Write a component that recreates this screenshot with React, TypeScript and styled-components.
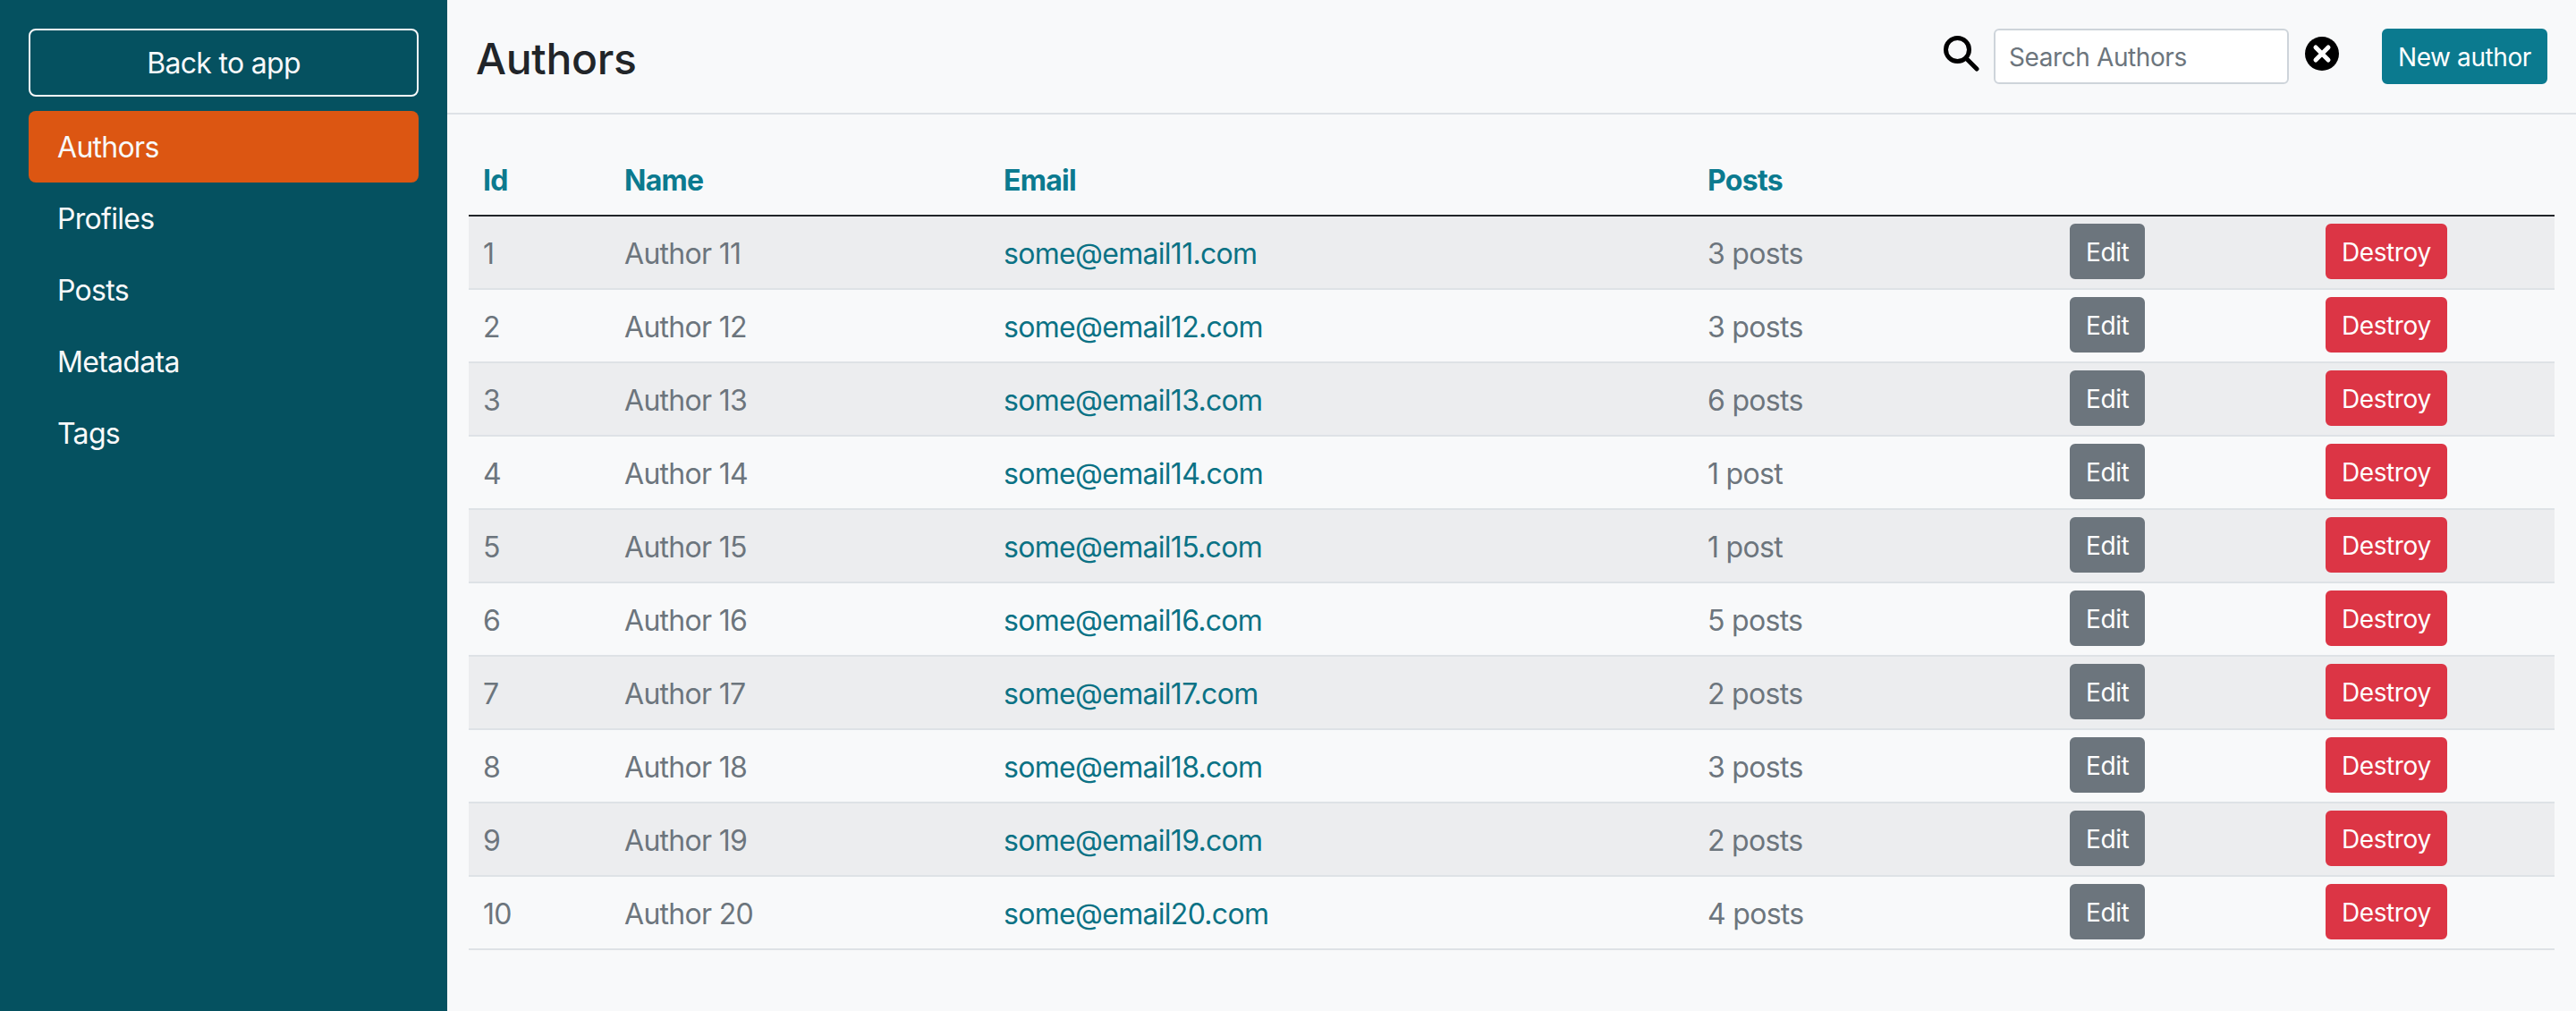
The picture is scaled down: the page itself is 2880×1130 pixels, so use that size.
import React from "react";
import styled, { createGlobalStyle } from "styled-components";

const Global = createGlobalStyle`
  html, body { margin: 0; padding: 0; background: #f8f9fa; }
  body { font-family: Inter, "Liberation Sans", sans-serif; font-size: 32px; line-height: 48px; letter-spacing: -0.7px; color: #212529; }
  * { box-sizing: border-box; }
`;

const Layout = styled.div`
  display: flex;
  width: 2880px;
  height: 1130px;
  overflow: hidden;
`;

const Sidebar = styled.aside`
  flex: 0 0 500px;
  background: #055160;
  padding: 32px;
  display: flex;
  flex-direction: column;
  gap: 16px;
`;

const BackButton = styled.a`
  display: block;
  height: 76px;
  border: 2px solid #f8f9fa;
  border-radius: 8px;
  padding: 13px 24px 11px;
  text-align: center;
  color: #f8f9fa;
`;

const NavList = styled.nav`
  display: flex;
  flex-direction: column;
`;

const NavItem = styled.a<{ $active?: boolean }>`
  display: block;
  height: 80px;
  padding: 17px 32px 15px;
  border-radius: 8px;
  color: #f8f9fa;
  background: ${(p) => (p.$active ? "#dc5612" : "transparent")};
`;

const Main = styled.main`
  flex: 1;
  min-width: 0;
  display: flex;
  flex-direction: column;
`;

const Header = styled.header`
  height: 128px;
  border-bottom: 2px solid #dee2e6;
  padding: 32px 32px 0 32px;
  display: flex;
  align-items: flex-start;
`;

const Title = styled.h1`
  margin: 2px 0 0;
  font-size: 48px;
  line-height: 64px;
  font-weight: 500;
  letter-spacing: -0.3px;
  flex: 1;
`;

const SearchIcon = styled.svg`
  width: 40px;
  height: 40px;
  margin: 8px 16px 0 0;
  display: block;
`;

const SearchInput = styled.input`
  width: 330px;
  height: 62px;
  border: 2px solid #ced4da;
  border-radius: 6px;
  background: #fff;
  padding: 1px 15px 0;
  font: 28px/42px Inter, "Liberation Sans", sans-serif;
  letter-spacing: -0.4px;
  color: #212529;
  &::placeholder { color: #6c757d; opacity: 1; }
`;

const ClearIcon = styled.svg`
  width: 38px;
  height: 38px;
  margin: 9px 48px 0 18px;
  display: block;
`;

const SmallButton = styled.a<{ $bg: string }>`
  display: inline-block;
  height: 62px;
  padding: 9px 16px 7px;
  border: 2px solid ${(p) => p.$bg};
  border-radius: 6px;
  background: ${(p) => p.$bg};
  color: #fff;
  font-size: 28px;
  line-height: 42px;
  letter-spacing: -0.4px;
  white-space: nowrap;
`;

const TableWrap = styled.div`
  padding: 32px 24px 0;
`;

const Table = styled.table`
  width: 2332px;
  table-layout: fixed;
  border-collapse: collapse;
`;

const HeadCell = styled.th`
  height: 80px;
  padding: 18px 16px 14px;
  text-align: left;
  font-weight: 700;
  color: #0b7a8f;
  border-bottom: 2px solid #212529;
`;

const Row = styled.tr<{ $striped: boolean }>`
  background: ${(p) => (p.$striped ? "#ecedef" : "transparent")};
`;

const Cell = styled.td`
  height: 82px;
  padding: 10px 16px 6px;
  border-bottom: 2px solid #dee2e6;
  color: #6c757d;
  vertical-align: middle;
`;

const ActionCell = styled(Cell)`
  padding-top: 0;
  padding-bottom: 2px;
  & > a { vertical-align: middle; }
`;

const EmailLink = styled.a`
  color: #0b7285;
`;

const widths = [158, 424, 787, 405, 286, 272];

const rows = [
  [1, "Author 11", "some@email11.com", "3 posts"],
  [2, "Author 12", "some@email12.com", "3 posts"],
  [3, "Author 13", "some@email13.com", "6 posts"],
  [4, "Author 14", "some@email14.com", "1 post"],
  [5, "Author 15", "some@email15.com", "1 post"],
  [6, "Author 16", "some@email16.com", "5 posts"],
  [7, "Author 17", "some@email17.com", "2 posts"],
  [8, "Author 18", "some@email18.com", "3 posts"],
  [9, "Author 19", "some@email19.com", "2 posts"],
  [10, "Author 20", "some@email20.com", "4 posts"],
];

export default function App() {
  return (
    <Layout>
      <Global />
      <Sidebar>
        <BackButton>Back to app</BackButton>
        <NavList>
          <NavItem $active>Authors</NavItem>
          <NavItem>Profiles</NavItem>
          <NavItem>Posts</NavItem>
          <NavItem>Metadata</NavItem>
          <NavItem>Tags</NavItem>
        </NavList>
      </Sidebar>
      <Main>
        <Header>
          <Title>Authors</Title>
          <SearchIcon viewBox="0 0 40 40" fill="none" stroke="#000" strokeWidth="5" strokeLinecap="round">
            <circle cx="15.5" cy="15.5" r="13" />
            <path d="M25 25 L37 37" />
          </SearchIcon>
          <SearchInput placeholder="Search Authors" />
          <ClearIcon viewBox="0 0 38 38">
            <circle cx="19" cy="19" r="19" fill="#000" />
            <path d="M12 12 L26 26 M26 12 L12 26" stroke="#fff" strokeWidth="5" strokeLinecap="round" />
          </ClearIcon>
          <SmallButton $bg="#0b7a8f">New author</SmallButton>
        </Header>
        <TableWrap>
          <Table>
            <colgroup>
              {widths.map((w) => (
                <col key={w} style={{ width: w }} />
              ))}
            </colgroup>
            <thead>
              <tr>
                <HeadCell>Id</HeadCell>
                <HeadCell>Name</HeadCell>
                <HeadCell>Email</HeadCell>
                <HeadCell>Posts</HeadCell>
                <HeadCell />
                <HeadCell />
              </tr>
            </thead>
            <tbody>
              {rows.map(([id, name, email, posts], i) => (
                <Row key={id} $striped={i % 2 === 0}>
                  <Cell>{id}</Cell>
                  <Cell>{name}</Cell>
                  <Cell><EmailLink>{email}</EmailLink></Cell>
                  <Cell>{posts}</Cell>
                  <ActionCell><SmallButton $bg="#6c757d">Edit</SmallButton></ActionCell>
                  <ActionCell><SmallButton $bg="#dc3545">Destroy</SmallButton></ActionCell>
                </Row>
              ))}
            </tbody>
          </Table>
        </TableWrap>
      </Main>
    </Layout>
  );
}
